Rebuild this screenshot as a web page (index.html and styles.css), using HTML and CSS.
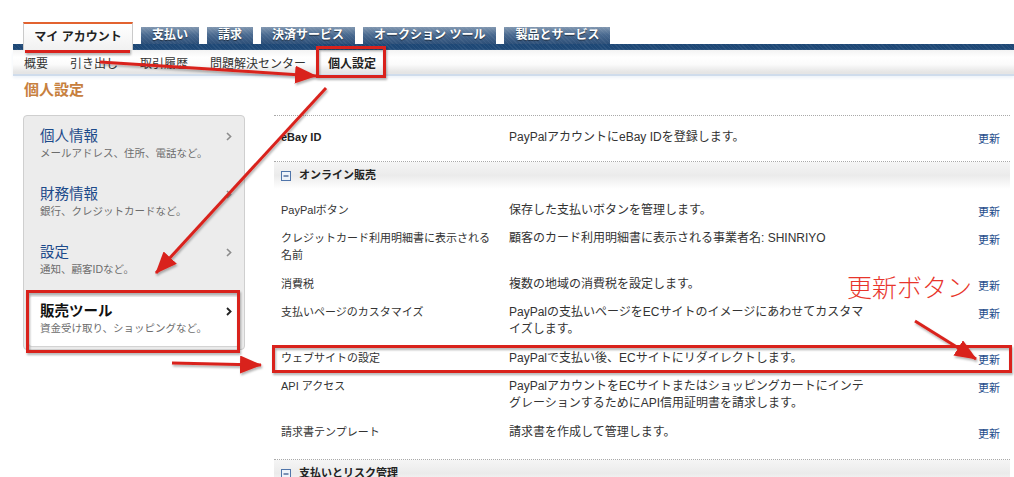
FILE: index.html
```html
<!DOCTYPE html>
<html lang="ja">
<head>
<meta charset="utf-8">
<title>個人設定</title>
<link rel="stylesheet" href="styles.css">
</head>
<body>
<div class="page">
  <header class="masthead">
    <nav class="tabs">
      <a class="tab tab-active">マイ アカウント</a>
      <a class="tab">支払い</a>
      <a class="tab">請求</a>
      <a class="tab">決済サービス</a>
      <a class="tab">オークション ツール</a>
      <a class="tab">製品とサービス</a>
    </nav>
    <div class="tabbar"></div>
    <nav class="subnav">
      <a>概要</a>
      <a>引き出し</a>
      <a>取引履歴</a>
      <a>問題解決センター</a>
      <a class="sub-active">個人設定</a>
    </nav>
  </header>

  <h1 class="page-title">個人設定</h1>

  <main class="layout">
    <aside class="side">
      <a class="side-item">
        <span class="side-text"><span class="side-title">個人情報</span><span class="side-sub">メールアドレス、住所、電話など。</span></span>
        <span class="chev"><svg width="6" height="9" viewBox="0 0 6 9"><path d="M1 1l3.6 3.5L1 8" fill="none" stroke="#8c8c8c" stroke-width="1.6"/></svg></span>
      </a>
      <a class="side-item">
        <span class="side-text"><span class="side-title">財務情報</span><span class="side-sub">銀行、クレジットカードなど。</span></span>
        <span class="chev"><svg width="6" height="9" viewBox="0 0 6 9"><path d="M1 1l3.6 3.5L1 8" fill="none" stroke="#8c8c8c" stroke-width="1.6"/></svg></span>
      </a>
      <a class="side-item">
        <span class="side-text"><span class="side-title">設定</span><span class="side-sub">通知、顧客IDなど。</span></span>
        <span class="chev"><svg width="6" height="9" viewBox="0 0 6 9"><path d="M1 1l3.6 3.5L1 8" fill="none" stroke="#8c8c8c" stroke-width="1.6"/></svg></span>
      </a>
      <a class="side-item side-selected">
        <span class="side-text"><span class="side-title">販売ツール</span><span class="side-sub">資金受け取り、ショッピングなど。</span></span>
        <span class="chev"><svg width="6" height="9" viewBox="0 0 6 9"><path d="M1 1l3.6 3.5L1 8" fill="none" stroke="#222" stroke-width="1.8"/></svg></span>
      </a>
    </aside>

    <section class="content">
      <div class="row row-top">
        <div class="c-label c-bold">eBay ID</div>
        <div class="c-desc">PayPalアカウントにeBay IDを登録します。</div>
        <div class="c-action"><a>更新</a></div>
      </div>

      <div class="sec-head">
        <svg class="toggle" width="10" height="10" viewBox="0 0 10 10"><rect x=".5" y=".5" width="9" height="9" fill="#eef3fa" stroke="#5075aa"/><path d="M2.5 5h5" stroke="#2c4f85" stroke-width="1.2"/></svg>
        <span>オンライン販売</span>
      </div>
      <div class="sec-body">
        <div class="row">
          <div class="c-label">PayPalボタン</div>
          <div class="c-desc">保存した支払いボタンを管理します。</div>
          <div class="c-action"><a>更新</a></div>
        </div>
        <div class="row">
          <div class="c-label">クレジットカード利用明細書に表示される名前</div>
          <div class="c-desc">顧客のカード利用明細書に表示される事業者名: SHINRIYO</div>
          <div class="c-action"><a>更新</a></div>
        </div>
        <div class="row">
          <div class="c-label">消費税</div>
          <div class="c-desc">複数の地域の消費税を設定します。</div>
          <div class="c-action"><a>更新</a></div>
        </div>
        <div class="row">
          <div class="c-label">支払いページのカスタマイズ</div>
          <div class="c-desc">PayPalの支払いページをECサイトのイメージにあわせてカスタマイズします。</div>
          <div class="c-action"><a>更新</a></div>
        </div>
        <div class="row">
          <div class="c-label">ウェブサイトの設定</div>
          <div class="c-desc">PayPalで支払い後、ECサイトにリダイレクトします。</div>
          <div class="c-action"><a>更新</a></div>
        </div>
        <div class="row">
          <div class="c-label">API アクセス</div>
          <div class="c-desc">PayPalアカウントをECサイトまたはショッピングカートにインテグレーションするためにAPI信用証明書を請求します。</div>
          <div class="c-action"><a>更新</a></div>
        </div>
        <div class="row">
          <div class="c-label">請求書テンプレート</div>
          <div class="c-desc">請求書を作成して管理します。</div>
          <div class="c-action"><a>更新</a></div>
        </div>
      </div>

      <div class="sec-head sec-head-next">
        <svg class="toggle" width="10" height="10" viewBox="0 0 10 10"><rect x=".5" y=".5" width="9" height="9" fill="#eef3fa" stroke="#5075aa"/><path d="M2.5 5h5" stroke="#2c4f85" stroke-width="1.2"/></svg>
        <span>支払いとリスク管理</span>
      </div>
    </section>
  </main>

  <svg class="annot" width="1014" height="477" viewBox="0 0 1014 477">
    <defs>
      <marker id="head" markerUnits="userSpaceOnUse" markerWidth="22" markerHeight="18" refX="21" refY="9" orient="auto">
        <path d="M0 0L22 9L0 18z" fill="#d9231d"/>
      </marker>
      <filter id="sh" x="-10%" y="-10%" width="130%" height="130%">
        <feDropShadow dx="1" dy="2" stdDeviation="1.2" flood-color="#000" flood-opacity="0.3"/>
      </filter>
    </defs>
    <g filter="url(#sh)" fill="none" stroke="#d9231d" stroke-width="3">
      <rect x="26.5" y="28.5" width="102" height="23"/>
      <rect x="317.5" y="47.5" width="67" height="29"/>
      <rect x="27.5" y="291.5" width="211" height="60"/>
      <rect x="273.5" y="346.5" width="737" height="25"/>
      <line x1="100" y1="62" x2="316" y2="76" marker-end="url(#head)"/>
      <line x1="326" y1="88" x2="156" y2="273" marker-end="url(#head)"/>
      <line x1="172" y1="363" x2="261" y2="365" marker-end="url(#head)"/>
      <line x1="915" y1="321" x2="976" y2="359" marker-end="url(#head)"/>
    </g>
  </svg>
  <div class="callout">更新ボタン</div>
</div>
</body>
</html>
```

FILE: styles.css
```css
* { box-sizing: border-box; }

body {
  margin: 0;
  background: #fff;
  color: #333;
  font-family: "Liberation Sans", "Noto Sans CJK JP", sans-serif;
}

a { text-decoration: none; cursor: pointer; }

.page {
  position: relative;
  width: 1014px;
  height: 477px;
  overflow: hidden;
}

/* ---------- masthead ---------- */
.masthead {
  margin-left: 13px;
  padding-top: 22px;
}

.tabs {
  display: flex;
  align-items: flex-end;
  height: 22px;
  padding-left: 10px;
  gap: 8px;
}

.tab {
  height: 17px;
  line-height: 17px;
  padding: 0 11px;
  font-size: 12px;
  font-weight: bold;
  color: #fff;
  white-space: nowrap;
  text-shadow: 0 1px 1px rgba(0, 0, 0, 0.55);
  background:
    repeating-linear-gradient(45deg, rgba(255,255,255,0.05) 0 1px, transparent 1px 3px),
    linear-gradient(#8197b0, #4a6a90 45%, #2d4f78);
}

.tab-active {
  position: relative;
  z-index: 1;
  width: 110px;
  height: 28px;
  margin-bottom: -6px;
  padding: 0;
  line-height: 26px;
  text-align: center;
  color: #222;
  text-shadow: none;
  background: linear-gradient(#ffffff, #f1f1f1);
  border-top: 2px solid #e2622f;
  border-left: 1px solid #cacaca;
  border-right: 1px solid #cacaca;
}

.tabbar {
  height: 6px;
  background:
    repeating-linear-gradient(45deg, rgba(255,255,255,0.06) 0 1px, transparent 1px 3px),
    #1e4876;
}

.subnav {
  display: flex;
  align-items: center;
  gap: 22px;
  height: 26px;
  padding-left: 11px;
  font-size: 12px;
  background: linear-gradient(#f3f3f3, #ffffff 30%, #fbfbfb 60%, #e5e5e5 92%);
  border-bottom: 2px solid #cfdcec;
  box-shadow: 0 2px 3px #eef3fa;
}

.subnav a { color: #333; }
.subnav .sub-active { font-weight: bold; color: #222; }

/* ---------- title ---------- */
.page-title {
  margin: 5px 0 16px 24px;
  font-size: 15px;
  line-height: 18px;
  font-weight: bold;
  color: #c7803e;
}

/* ---------- layout ---------- */
.layout {
  display: flex;
  align-items: flex-start;
  gap: 29px;
  padding-left: 23px;
}

.side {
  width: 222px;
  flex: none;
  padding: 1px 0 3px;
  background: #ececec;
  border: 1px solid #cfcfcf;
  border-radius: 4px;
}

.side-item {
  display: flex;
  justify-content: space-between;
  align-items: flex-start;
  height: 58px;
  padding: 10px 12px 14px 16px;
}

.side-text {
  display: flex;
  flex-direction: column;
}

.side-title {
  font-size: 14.5px;
  line-height: 18px;
  color: #1c4a8a;
  white-space: nowrap;
}

.side-sub {
  font-size: 10.5px;
  line-height: 16px;
  color: #6c6c6c;
  white-space: nowrap;
}

.chev {
  display: flex;
  align-items: center;
  height: 18px;
}

.side-selected {
  height: 49px;
  margin: 6px 5px 0;
  padding: 5px 7px 10px 11px;
  background: #fff;
  border-radius: 3px;
  box-shadow: 0 1px 1px rgba(0, 0, 0, 0.12);
}

.side-selected .side-title {
  font-weight: bold;
  color: #111;
}

/* ---------- content table ---------- */
.content {
  flex: 1;
  margin-right: 4px;
  border-top: 1px dotted #a9a9a9;
}

.row {
  display: flex;
  padding: 6px 0 5.5px;
  line-height: 17px;
}

.row-top {
  padding: 13px 0 15px;
  border-bottom: 1px dotted #a9a9a9;
}

.c-label {
  width: 235px;
  flex: none;
  padding: 0 14px 0 7px;
  font-size: 11px;
  color: #333;
}

.c-bold { font-weight: bold; color: #222; }

.c-desc {
  width: 356px;
  flex: none;
  font-size: 12px;
  color: #333;
}

.c-action {
  flex: 1;
  padding-right: 10px;
  font-size: 11px;
  text-align: right;
}

.c-action a {
  display: block;
  margin: 2px 0 -2px;
  line-height: 17px;
  color: #1f4d8c;
}

.sec-head {
  display: flex;
  align-items: center;
  gap: 8px;
  padding: 5px 7px 5px;
  font-size: 11px;
  line-height: 17px;
  font-weight: bold;
  color: #222;
  background: linear-gradient(#f5f5f5, #ebebeb 50%, #ffffff);
}

.toggle { flex: none; }

.sec-body {
  padding: 6.5px 0 13px;
}

.sec-head-next {
  border-top: 1px dotted #a9a9a9;
}

/* ---------- annotations (overlay) ---------- */
.annot {
  position: absolute;
  left: 0;
  top: 0;
  pointer-events: none;
}

.callout {
  position: absolute;
  left: 847px;
  top: 271px;
  font-family: "Noto Sans CJK JP", sans-serif;
  font-size: 25px;
  font-weight: 300;
  line-height: 30px;
  color: #e8352b;
  white-space: nowrap;
}
```
